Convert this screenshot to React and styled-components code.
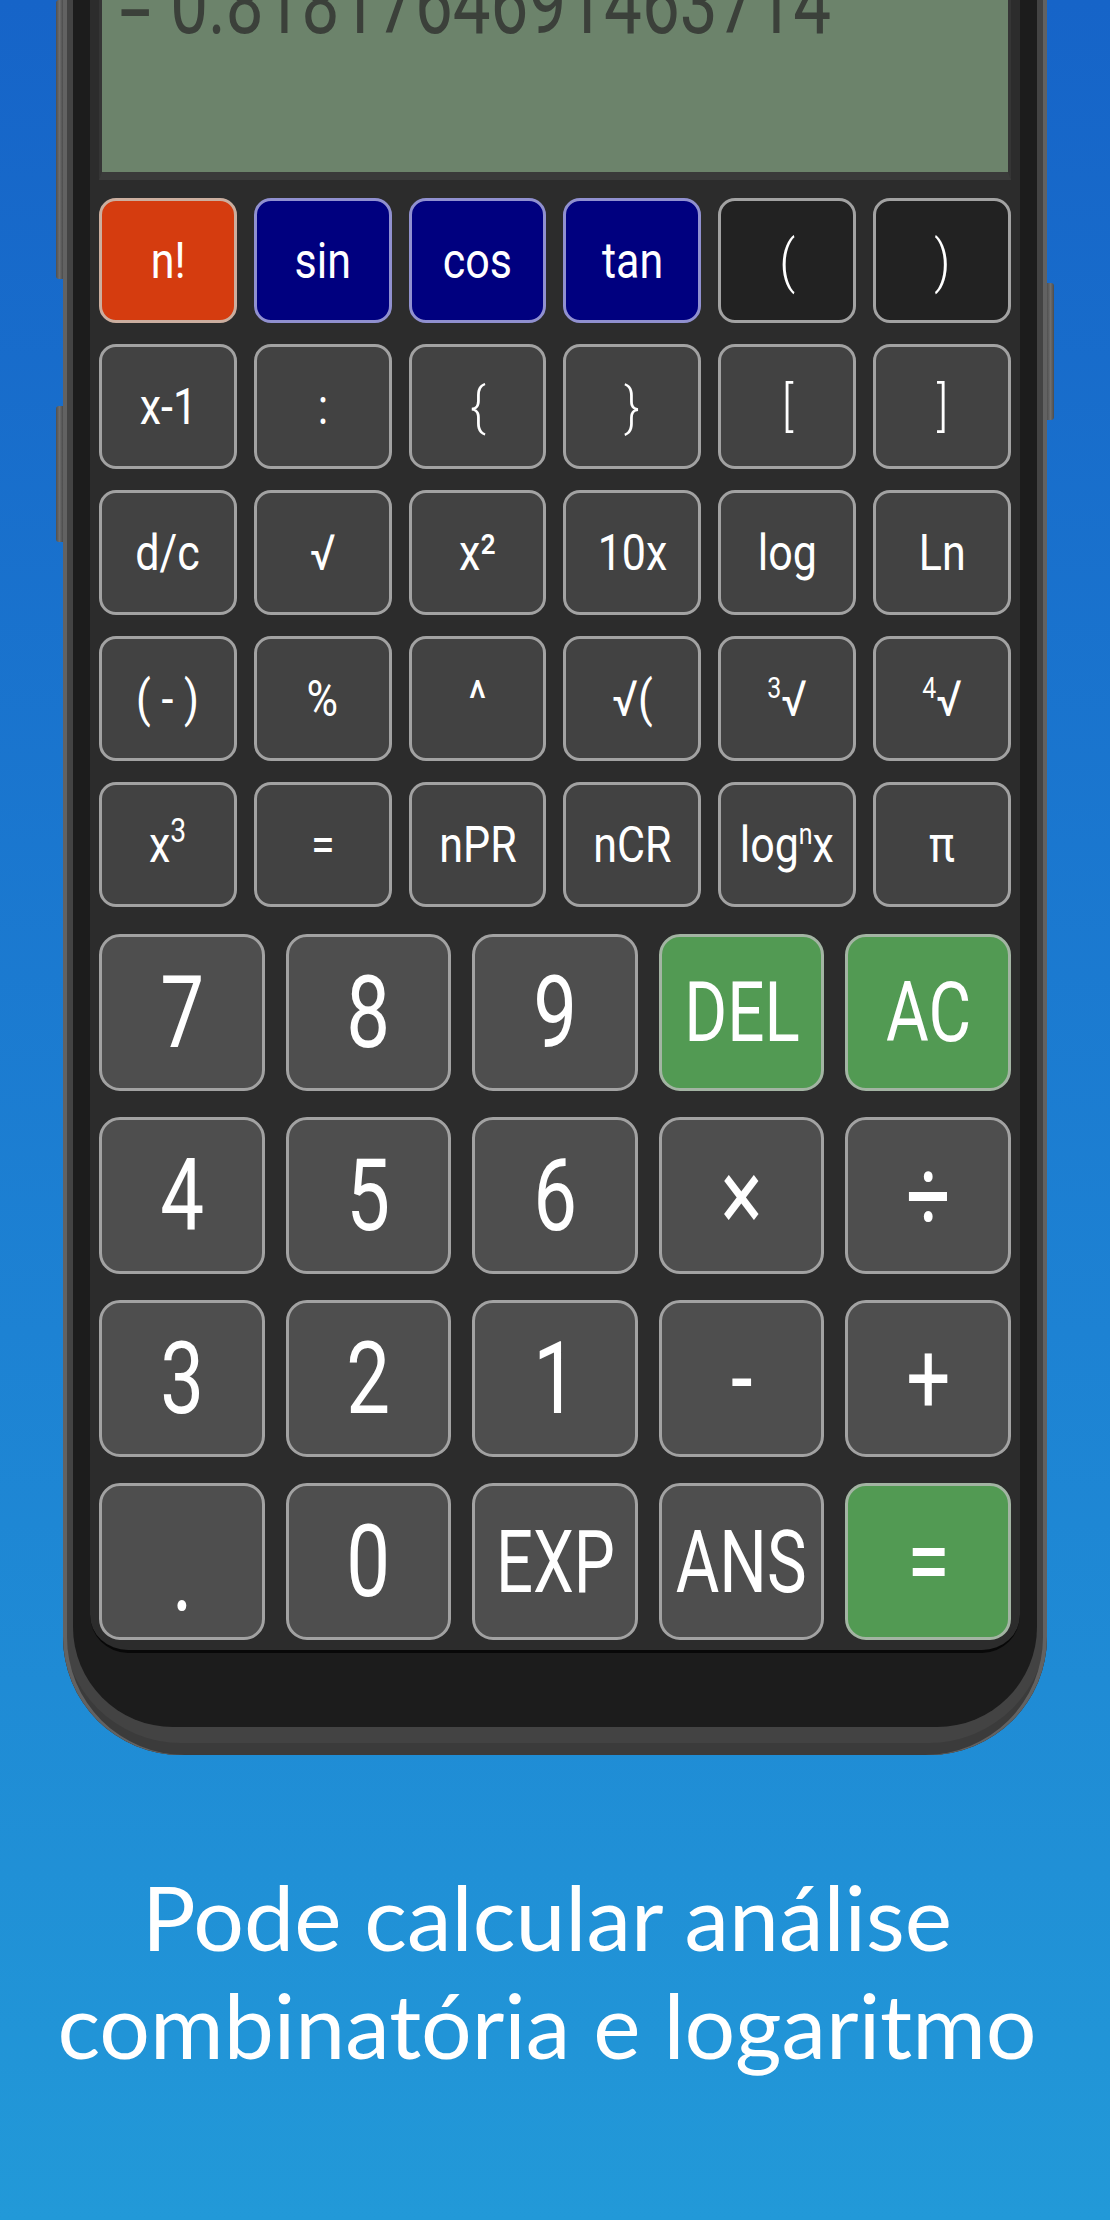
import React from 'react';
import styled, { createGlobalStyle } from 'styled-components';

const GlobalStyle = createGlobalStyle`
  html, body {
    margin: 0;
    padding: 0;
  }
  body {
    background: #1e80d0;
  }
`;

const Page = styled.div`
  width: 1110px;
  height: 2220px;
  overflow: hidden;
  background: linear-gradient(180deg, #1664c8 0%, #1d82d3 60%, #2299d8 100%);
  font-family: Roboto, "Liberation Sans", sans-serif;
`;

const PhoneWrap = styled.div`
  position: relative;
  width: 984px;
  margin-left: 63px;
`;

// buttons on the phone's edges
const SideKey = styled.div`
  position: absolute;
  top: ${p => p.$top}px;
  height: ${p => p.$h}px;
  width: 7px;
  ${p => (p.$right ? 'right: -7px; border-radius: 0 3px 3px 0;' : 'left: -7px; border-radius: 3px 0 0 3px;')}
  background: linear-gradient(90deg, #505050, #6e6e6e 50%, #4c4c4c);
`;

const Frame = styled.div`
  background: #434343;
  border-radius: 0 0 118px 118px;
  padding: 0 10px 28px;
  box-shadow: inset 4px 0 0 #626262, inset -4px 0 0 #626262, inset 0 -12px 0 #3b3b3b;
`;

const Bezel = styled.div`
  background: #1c1c1c;
  border-radius: 0 0 100px 100px;
  padding: 0 17px 74px;
`;

const Screen = styled.div`
  background: #2c2c2c;
  border-radius: 0 0 38px 38px;
  overflow: hidden;
  padding: 0 9px 10px;
  border-bottom: 3px solid #080808;
`;

const Display = styled.div`
  height: 172px;
  background: #6c836b;
  border: 3px solid #353535;
  border-top: none;
  border-bottom: 8px solid #3a3a3a;
  overflow: hidden;
`;

const Readout = styled.div`
  font-family: Roboto, "Liberation Sans", sans-serif;
  font-size: 88px;
  line-height: 88px;
  color: #3b403a;
  margin-top: -41px;
  padding-left: 19px;
  transform: scaleX(0.765);
  transform-origin: left center;
  white-space: nowrap;
`;

const FuncGrid = styled.div`
  display: grid;
  grid-template-columns: repeat(6, 1fr);
  grid-auto-rows: 125px;
  column-gap: 17px;
  row-gap: 21px;
  margin-top: 18px;
`;

const NumGrid = styled.div`
  display: grid;
  grid-template-columns: repeat(5, 1fr);
  grid-auto-rows: 157px;
  column-gap: 21px;
  row-gap: 26px;
  margin-top: 27px;
`;

const tones = {
  fn: { bg: '#424242', line: '#a2a2a2' },
  num: { bg: '#4e4e4e', line: '#a2a2a2' },
  dark: { bg: '#222222', line: '#a2a2a2' },
  navy: { bg: '#00007f', line: '#9090d0' },
  orange: { bg: '#d53c0f', line: '#cbae9f' },
  green: { bg: '#529a53', line: '#a3b4a3' },
};

const Key = styled.div`
  display: flex;
  align-items: center;
  justify-content: center;
  box-sizing: border-box;
  background: ${p => tones[p.$tone].bg};
  border: 3px solid ${p => tones[p.$tone].line};
  border-radius: ${p => (p.$big ? 21 : 17)}px;
  color: #fff;
  overflow: hidden;
`;

const Label = styled.span`
  display: inline-block;
  font-size: ${p => p.$size}px;
  font-weight: ${p => p.$weight || 400};
  line-height: 1;
  transform: translateY(${p => p.$dy || 0}px) scaleX(${p => p.$sx});
  white-space: nowrap;
`;

const Sup = styled.span`
  font-size: ${p => p.$scale || 0.58}em;
  vertical-align: 0.62em;
  line-height: 0;
`;

const Caption = styled.h1`
  margin: 108px 0 0;
  padding-right: 16px;
  font-family: Lato, "Open Sans", sans-serif;
  font-weight: 400;
  font-size: 89.5px;
  line-height: 108px;
  color: #ffffff;
  text-align: center;
`;

const funcKeys = [
  { t: 'n!', tone: 'orange' },
  { t: 'sin', tone: 'navy' },
  { t: 'cos', tone: 'navy' },
  { t: 'tan', tone: 'navy' },
  { t: '(', tone: 'dark', size: 58, w: 300 },
  { t: ')', tone: 'dark', size: 58, w: 300 },
  { t: 'x-1' },
  { t: ':' },
  { t: '{', size: 54, w: 300 },
  { t: '}', size: 54, w: 300 },
  { t: '[', size: 54, w: 300 },
  { t: ']', size: 54, w: 300 },
  { t: 'd/c' },
  { t: '√' },
  { t: 'x²' },
  { t: '10x' },
  { t: 'log' },
  { t: 'Ln' },
  { t: '( - )' },
  { t: '%' },
  { t: '^' },
  { t: '√(' },
  { t: <><Sup>3</Sup>√</> },
  { t: <><Sup>4</Sup>√</> },
  { t: <>x<Sup $scale={0.66}>3</Sup></> },
  { t: '=' },
  { t: 'nPR' },
  { t: 'nCR' },
  { t: <>log<Sup>n</Sup>x</> },
  { t: 'π' },
];

const numKeys = [
  { t: '7' }, { t: '8' }, { t: '9' },
  { t: 'DEL', tone: 'green', size: 84 },
  { t: 'AC', tone: 'green', size: 84 },
  { t: '4' }, { t: '5' }, { t: '6' }, { t: '×' }, { t: '÷' },
  { t: '3' }, { t: '2' }, { t: '1' }, { t: '-' }, { t: '+' },
  { t: '.', dy: 14 }, { t: '0' },
  { t: 'EXP', size: 88, sx: 0.74 },
  { t: 'ANS', size: 88, sx: 0.76 },
  { t: '=', tone: 'green' },
];

export default function App() {
  return (
    <Page>
      <GlobalStyle />
      <PhoneWrap>
        <SideKey $top={0} $h={279} />
        <SideKey $top={406} $h={136} />
        <SideKey $right $top={283} $h={137} />
        <Frame>
          <Bezel>
            <Screen>
              <Display>
                <Readout>= 0.8181764691463714</Readout>
              </Display>

              <FuncGrid>
                {funcKeys.map((k, i) => (
                  <Key key={i} $tone={k.tone || 'fn'}>
                    <Label $size={k.size || 50} $weight={k.w} $sx={0.86}>{k.t}</Label>
                  </Key>
                ))}
              </FuncGrid>

              <NumGrid>
                {numKeys.map((k, i) => (
                  <Key key={i} $big $tone={k.tone || 'num'}>
                    <Label $size={k.size || 100} $sx={k.sx || 0.78} $dy={k.dy}>{k.t}</Label>
                  </Key>
                ))}
              </NumGrid>
            </Screen>
          </Bezel>
        </Frame>
      </PhoneWrap>

      <Caption>
        Pode calcular análise
        <br />
        combinatória e logaritmo
      </Caption>
    </Page>
  );
}
